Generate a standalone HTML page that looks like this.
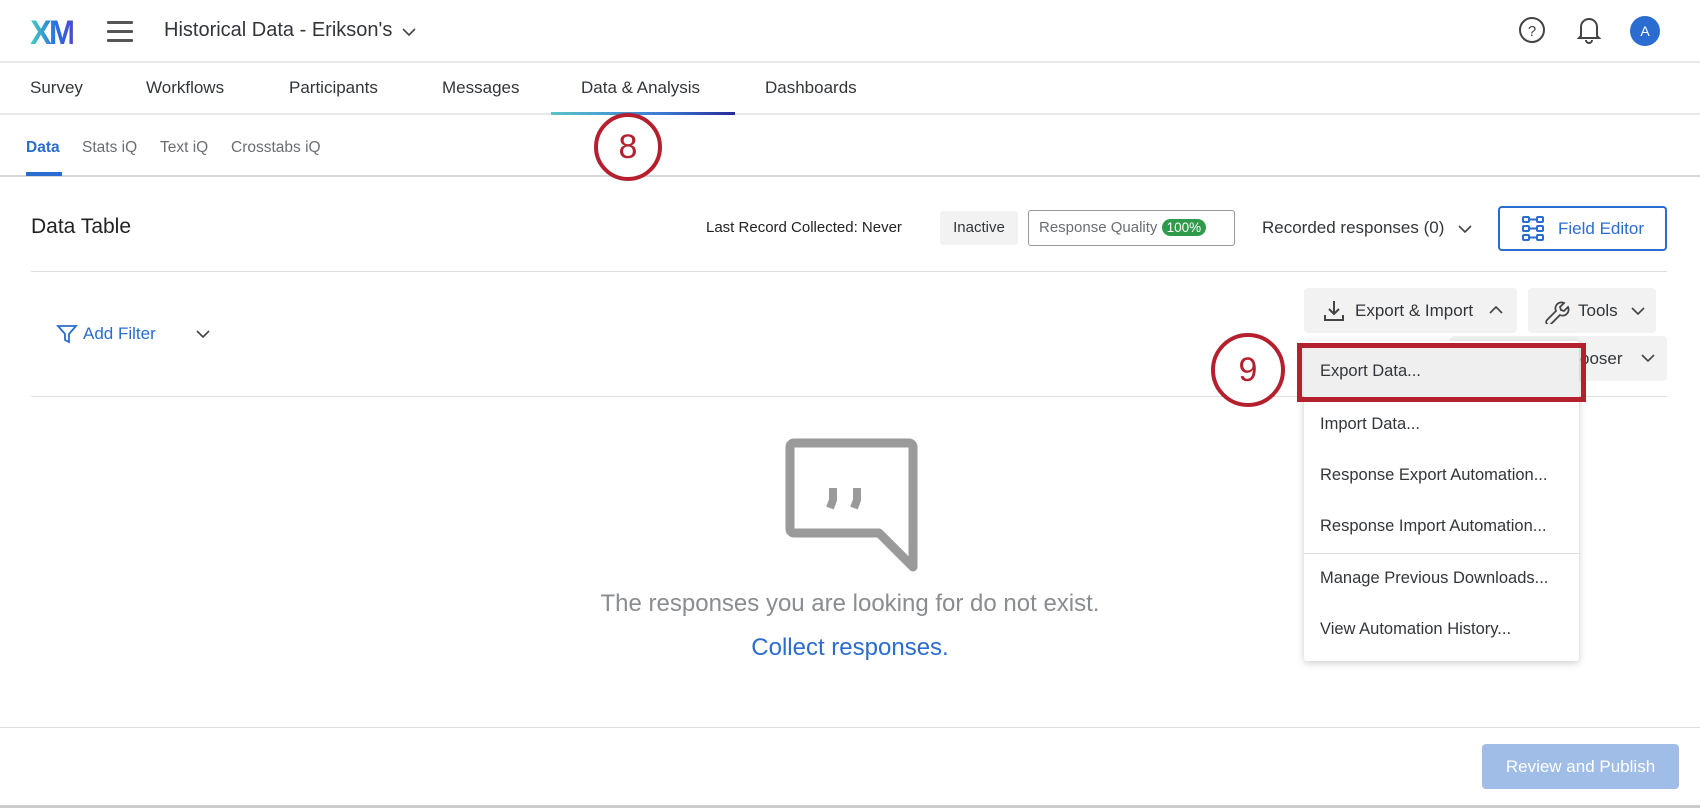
<!DOCTYPE html>
<html><head><style>
*{margin:0;padding:0;box-sizing:border-box}
body{width:1700px;height:808px;background:#fff;font-family:"Liberation Sans",sans-serif;color:#32363a;position:relative;overflow:hidden}
.a{position:absolute;white-space:nowrap}
.ln{position:absolute;left:0;width:1700px;height:2px;background:#e8e8e8}
.mi{position:absolute;left:1320px;font-size:16.5px;color:#32363a}
.cv{position:absolute}
</style></head><body>
<svg width="0" height="0" style="position:absolute"><defs><symbol id="ch" viewBox="0 0 14 8"><path d="M1 1l6 6 6-6" fill="none" stroke="#444" stroke-width="1.6"/></symbol></defs></svg>
<!-- header -->
<div class="a" style="left:29px;top:14px;font-size:34px;font-weight:bold;letter-spacing:-3px;background:linear-gradient(90deg,#3fd0c0,#2b6fe0 60%,#4a4ad0);-webkit-background-clip:text;color:transparent;transform:scaleX(0.95)">XM</div>
<div class="a" style="left:107px;top:21px;width:26px;height:3px;background:#555;box-shadow:0 9px 0 #555,0 18px 0 #555;border-radius:1px;"></div>
<div class="a" style="left:164px;top:19px;font-size:20px;color:#32363a">Historical Data - Erikson's</div>
<svg class="cv" style="left:402px;top:28px" width="14" height="8"><use href="#ch"/></svg>
<svg class="a" style="left:1518px;top:16px" width="28" height="28"><circle cx="14" cy="14" r="12" fill="none" stroke="#444" stroke-width="2"/><text x="14" y="20" font-size="15" font-family="Liberation Sans" text-anchor="middle" fill="#444">?</text></svg>
<svg class="a" style="left:1576px;top:15px" width="26" height="30"><path d="M5 21V12a8 8 0 0 1 16 0v9l2 2H3z M10 25a3 3 0 0 0 6 0" fill="none" stroke="#444" stroke-width="2"/></svg>
<div class="a" style="left:1630px;top:16px;width:30px;height:30px;border-radius:50%;background:#2b6cd1;color:#fff;font-size:14px;text-align:center;line-height:30px">A</div>
<div class="ln" style="top:61px"></div>
<!-- nav -->
<div class="a" style="top:78px;left:30px;font-size:17px">Survey</div>
<div class="a" style="top:78px;left:146px;font-size:17px">Workflows</div>
<div class="a" style="top:78px;left:289px;font-size:17px">Participants</div>
<div class="a" style="top:78px;left:442px;font-size:17px">Messages</div>
<div class="a" style="top:78px;left:581px;font-size:17px">Data &amp; Analysis</div>
<div class="a" style="top:78px;left:765px;font-size:17px">Dashboards</div>
<div class="ln" style="top:113px"></div>
<div class="a" style="left:551px;top:112px;width:184px;height:3px;background:linear-gradient(90deg,#5bc4c8,#3a7bd5 60%,#262a9a)"></div>
<!-- subnav -->
<div class="a" style="top:139px;left:26px;font-size:15.5px;color:#2b6cd1;font-weight:bold">Data</div>
<div class="a" style="top:139px;left:82px;font-size:15.5px;color:#6a6e72">Stats iQ</div>
<div class="a" style="top:139px;left:160px;font-size:15.5px;color:#6a6e72">Text iQ</div>
<div class="a" style="top:139px;left:231px;font-size:15.5px;color:#6a6e72">Crosstabs iQ</div>
<div class="ln" style="top:175px;background:#d8d8d8"></div>
<div class="a" style="left:26px;top:172px;width:36px;height:4px;background:#2b6cd1"></div>
<div class="a" style="left:594px;top:113px;width:68px;height:68px;border-radius:50%;border:4px solid #b5202e;background:#fff;color:#b5202e;font-size:34px;text-align:center;line-height:60px">8</div>
<!-- data table header -->
<div class="a" style="left:31px;top:215px;font-size:21px;color:#222">Data Table</div>
<div class="a" style="left:706px;top:219px;font-size:15px;color:#222">Last Record Collected: Never</div>
<div class="a" style="left:940px;top:211px;width:78px;height:34px;background:#f2f2f2;border-radius:3px;font-size:15px;text-align:center;line-height:34px">Inactive</div>
<div class="a" style="left:1028px;top:210px;width:207px;height:36px;border:1px solid #999;border-radius:3px;font-size:15px;color:#6a6e72;padding-left:10px;line-height:34px">Response Quality <span style="background:#2e9a4a;color:#fff;border-radius:9px;padding:1px 5px;font-size:13.5px">100%</span></div>
<div class="a" style="left:1262px;top:218px;font-size:17px;color:#32363a">Recorded responses (0)</div>
<svg class="cv" style="left:1458px;top:225px" width="14" height="8"><use href="#ch"/></svg>
<div class="a" style="left:1498px;top:206px;width:169px;height:45px;border:2px solid #2b6cd1;border-radius:4px;color:#2b6cd1;font-size:17px;line-height:41px;padding-left:58px">Field Editor</div>
<svg class="a" style="left:1522px;top:216px" width="26" height="26" fill="none" stroke="#2b6cd1" stroke-width="2"><rect x="1" y="1" width="6" height="5" rx="1"/><rect x="15" y="1" width="6" height="5" rx="1"/><rect x="1" y="10" width="6" height="5" rx="1"/><rect x="15" y="10" width="6" height="5" rx="1"/><rect x="1" y="19" width="6" height="5" rx="1"/><rect x="15" y="19" width="6" height="5" rx="1"/><path d="M7 3.5h8M7 12.5h8M7 21.5h8"/></svg>
<div class="a" style="left:31px;top:271px;width:1636px;height:1px;background:#ddd"></div>
<!-- toolbar -->
<svg class="a" style="left:56px;top:323px" width="22" height="22" fill="none" stroke="#2b6cd1" stroke-width="1.8"><path d="M2 3h18l-7 8v8l-4-2v-6z"/></svg>
<div class="a" style="left:83px;top:324px;font-size:17px;color:#2b6cd1">Add Filter</div>
<svg class="cv" style="left:196px;top:330px" width="14" height="8"><use href="#ch"/></svg>
<div class="a" style="left:1304px;top:288px;width:213px;height:45px;background:#f2f2f2;border-radius:4px"></div>
<svg class="a" style="left:1322px;top:299px" width="24" height="24" fill="none" stroke="#444" stroke-width="2"><path d="M12 2v13M7 10l5 5 5-5M3 16v5h18v-5"/></svg>
<div class="a" style="left:1355px;top:301px;font-size:17px">Export &amp; Import</div>
<svg class="cv" style="left:1489px;top:306px;transform:rotate(180deg)" width="14" height="8"><use href="#ch"/></svg>
<div class="a" style="left:1528px;top:288px;width:128px;height:45px;background:#f2f2f2;border-radius:4px"></div>
<svg class="a" style="left:1544px;top:298px" width="26" height="26" fill="none" stroke="#444" stroke-width="1.8"><path d="M3 22l9-9a6 6 0 0 1 8-8l-4 4 1 3 3 1 4-4a6 6 0 0 1-8 8l-9 9a2 2 0 0 1-4-4z"/></svg>
<div class="a" style="left:1578px;top:301px;font-size:17px">Tools</div>
<svg class="cv" style="left:1631px;top:307px" width="14" height="8"><use href="#ch"/></svg>
<div class="a" style="left:1450px;top:336px;width:217px;height:45px;background:#f2f2f2;border-radius:4px;font-size:17px;line-height:45px;padding-left:130px">ooser</div>
<svg class="cv" style="left:1641px;top:354px" width="14" height="8"><use href="#ch"/></svg>
<div class="a" style="left:31px;top:396px;width:1636px;height:1px;background:#ddd"></div>
<!-- dropdown -->
<div class="a" style="left:1304px;top:341px;width:275px;height:320px;background:#fff;box-shadow:0 2px 8px rgba(0,0,0,.2);border-radius:3px"></div>
<div class="a" style="left:1304px;top:346px;width:275px;height:52px;background:#efefef"></div>
<div class="a" style="left:1304px;top:553px;width:275px;height:1px;background:#ddd"></div>
<div class="mi" style="top:362px">Export Data...</div>
<div class="mi" style="top:415px">Import Data...</div>
<div class="mi" style="top:466px">Response Export Automation...</div>
<div class="mi" style="top:517px">Response Import Automation...</div>
<div class="mi" style="top:569px">Manage Previous Downloads...</div>
<div class="mi" style="top:620px">View Automation History...</div>
<div class="a" style="left:1297px;top:343px;width:289px;height:59px;border:5px solid #b5202e"></div>
<div class="a" style="left:1211px;top:333px;width:74px;height:74px;border-radius:50%;border:4px solid #b5202e;background:#fff;color:#b5202e;font-size:34px;text-align:center;line-height:66px">9</div>
<!-- empty state -->
<svg class="a" style="left:780px;top:438px" width="140" height="140" fill="none" stroke="#9a9a9a" stroke-width="9" stroke-linejoin="round"><path d="M14 5h115a4 4 0 0 1 4 4v120l-34-34H14a4 4 0 0 1-4-4V9a4 4 0 0 1 4-4z"/><path d="M53 50v12l-3 8M77 50v12l-3 8" stroke-width="8" stroke-linecap="butt"/></svg>
<div class="a" style="left:0;width:1700px;top:590px;text-align:center;font-size:24px;color:#8a8d90">The responses you are looking for do not exist.</div>
<div class="a" style="left:0;width:1700px;top:634px;text-align:center;font-size:24px;color:#2b6cd1">Collect responses.</div>
<!-- footer -->
<div class="a" style="left:0;top:727px;width:1700px;height:1px;background:#ddd"></div>
<div class="a" style="left:1482px;top:744px;width:197px;height:45px;background:#9fbde6;border-radius:4px;color:#fff;font-size:17px;text-align:center;line-height:45px">Review and Publish</div>
<div class="a" style="left:0;top:805px;width:1700px;height:3px;background:#ccc"></div>
</body></html>
